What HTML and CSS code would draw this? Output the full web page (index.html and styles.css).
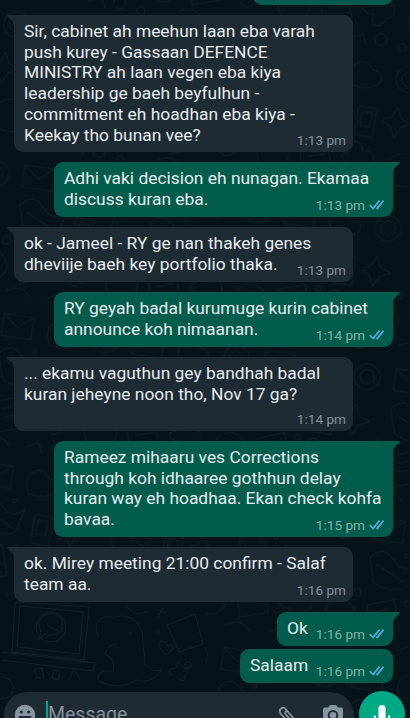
FILE: index.html
```html
<!DOCTYPE html>
<html lang="dv-Latn">
<head>
<meta charset="utf-8">
<title>Chat</title>
<link rel="stylesheet" href="styles.css">
</head>
<body>
<svg width="0" height="0" class="defs">
  <symbol id="ticks" viewBox="0 0 16 11"><path d="M.7 6.2 4.2 9.4 10.500 1.600M7.400 8.700l.9.700 6.200-7.800" fill="none" stroke="currentColor" stroke-width="1.800"/></symbol>
  <symbol id="tail" viewBox="0 0 8 10"><path d="M8 0H1Q-.6.4.6 1.8L5.2 6Q6.6 7.4 6.6 10H8Z" fill="currentColor"/></symbol>
</svg>
<main class="chat">
  <svg class="wallpaper" viewBox="0 0 410 718">
    <defs>
      <pattern id="doodles" width="132" height="150" patternUnits="userSpaceOnUse" patternTransform="rotate(8)">
        <circle cx="20" cy="22" r="13"/><circle cx="20" cy="22" r="7"/>
        <path d="M48 10h30v22H48zM48 10l15 12 15-12M97 35q-9-17 4-24 9-3 13 6 13 0 10 12-8 10-27 6zM8 62l5-11 5 11 11 4-11 5-5 11-5-11-10-5zM48 50q12-15 24 0t24 0l-7 25q-17 9-34 0zM55 56l31 15M106 55h18v29h-18zM110 60h10v14h-10zM12 103q15-14 27 0t-5 25q-26 6-22-25zM52 98l26-9 9 30-28 9zM60 104l15-5M63 112l17-5M103 103c-9-15 14-17 13-3 12-7 18 11 5 14-2 15-20 8-12-2-15 2-16-11-6-9zM46 137q15-10 25 3M88 139l12-6 5 11"/>
        <circle cx="91" cy="91" r="3"/><circle cx="40" cy="87" r="4"/><circle cx="84" cy="44" r="2"/><circle cx="9" cy="141" r="4"/><circle cx="119" cy="136" r="6"/>
      </pattern>
    </defs>
    <rect class="tile" width="410" height="600" fill="url(#doodles)"/>
    <rect class="tile" x="205" y="600" width="205" height="118" fill="url(#doodles)"/>
    <path d="M15 602 12 652 84 660 89 607zM20 606 17 647 79 654 83 612zM2 652l93 11-2 8-91-11M98 637q-7-22 15-20 21-5 29 14l3 34q8 8 16 5-8 15-25 10-15 11-36 2-7-12 13-11 3-12-8-17 4-12 13-9M167 625l28-11 8 30-24 8zM34 670l8-2 2 9-7 1zM54 670l6 2-2 8-6-2zM69 680l5-12 6 12M161 649q-6-8 2-8 4 2 5 5 5-4 5 3l-7 6zM126 606q8 12 22 5M157 610l9 3m-8 5 5-11M173 676q-9-7 3-8 2-10 7 0 9 1 2 7 1 9-6 4"/>
    <circle cx="51" cy="627" r="15"/><path d="m38 640 3-8q-6-12 4-17 11-5 17 5 3 14-10 15-5 1-8-1zM46 621q3 9 12 9"/>
    <circle cx="130" cy="633" r="1"/><circle cx="157" cy="632" r="2"/><circle cx="188" cy="665" r="3"/><circle cx="2" cy="688" r="11"/>
  </svg>

  <section class="messages">
    <div class="message out cut"></div>

    <div class="message in six"><svg class="tail"><use href="#tail"/></svg><p>Sir, cabinet ah meehun laan eba varah<br>push kurey - Gassaan DEFENCE<br>MINISTRY ah laan vegen eba kiya<br>leadership ge baeh beyfulhun -<br>commitment eh hoadhan eba kiya -<br>Keekay tho bunan vee?</p><span class="meta">1:13 pm</span></div>

    <div class="message out"><svg class="tail"><use href="#tail"/></svg><p>Adhi vaki decision eh nunagan. Ekamaa<br>discuss kuran eba.</p><span class="meta">1:13 pm <svg class="ticks"><use href="#ticks"/></svg></span></div>

    <div class="message in"><svg class="tail"><use href="#tail"/></svg><p>ok - Jameel - RY ge nan thakeh genes<br>dheviije baeh key portfolio thaka.</p><span class="meta">1:13 pm</span></div>

    <div class="message out"><svg class="tail"><use href="#tail"/></svg><p>RY geyah badal kurumuge kurin cabinet<br>announce koh nimaanan.</p><span class="meta">1:14 pm <svg class="ticks"><use href="#ticks"/></svg></span></div>

    <div class="message in spaced"><svg class="tail"><use href="#tail"/></svg><p>... ekamu vaguthun gey bandhah badal<br>kuran jeheyne noon tho, Nov 17 ga?</p><span class="meta">1:14 pm</span></div>

    <div class="message out four"><svg class="tail"><use href="#tail"/></svg><p>Rameez mihaaru ves Corrections<br>through koh idhaaree gothhun delay<br>kuran way eh hoadhaa. Ekan check kohfa<br>bavaa.</p><span class="meta">1:15 pm <svg class="ticks"><use href="#ticks"/></svg></span></div>

    <div class="message in"><svg class="tail"><use href="#tail"/></svg><p>ok. Mirey meeting 21:00 confirm - Salaf<br>team aa.</p><span class="meta">1:16 pm</span></div>

    <div class="message out single ok"><svg class="tail"><use href="#tail"/></svg><p>Ok</p><span class="meta">1:16 pm <svg class="ticks"><use href="#ticks"/></svg></span></div>

    <div class="message out single salaam"><p>Salaam</p><span class="meta">1:16 pm <svg class="ticks"><use href="#ticks"/></svg></span></div>
  </section>

  <footer class="composer">
    <div class="field">
      <svg class="emoji" viewBox="0 0 22 22"><circle cx="11" cy="11" r="10.2" fill="#8797a0"/><circle cx="7.3" cy="8" r="1.6" fill="#1f2c34"/><circle cx="14.7" cy="8" r="1.6" fill="#1f2c34"/><path d="M4.500 12h13q-1 5.500-6.500 5.500T4.500 12z" fill="#1f2c34"/></svg>
      <span class="caret"></span>
      <span class="placeholder">Message</span>
      <svg class="clip" viewBox="0 0 24 24"><path d="M21 21 8 5.500Q5.500 2.500 3 4.500T2.500 9.500L14 22.500M17 21.500 7.500 10Q6.500 8 8 7.500T10.500 8.500L22 22" fill="none" stroke="#8797a0" stroke-width="1.700"/></svg>
      <svg class="camera" viewBox="0 0 22 22"><path d="M2.500 3.500H6L8 1h6l2 2.500h3.500Q21 3.500 21 5.500V18q0 2-2 2H3q-2 0-2-2V5.500q0-2 1.500-2z" fill="#8797a0"/><circle cx="11" cy="11.200" r="5.300" fill="#1f2c34"/><circle cx="11" cy="11.200" r="3.300" fill="#8797a0"/></svg>
    </div>
    <div class="mic"><svg viewBox="0 0 20 26"><rect x="6.400" y="1" width="7.200" height="15" rx="3.600" fill="#fff"/><path d="M2.700 11.500Q3 19 10 19t7.300-7.500M10 19v5" fill="none" stroke="#fff" stroke-width="2"/></svg></div>
  </footer>
</main>
</body>
</html>
```
FILE: styles.css
```css
* { box-sizing: border-box; }
body { margin: 0; background: #07131a; font-family: Roboto, "Liberation Sans", sans-serif; }
.defs { position: absolute; }
.chat { position: relative; width: 410px; height: 718px; overflow: hidden; display: flex; flex-direction: column; }
.wallpaper { position: absolute; inset: 0; width: 410px; height: 718px; fill: none; stroke: #10212a; stroke-width: 1; }
.tile { stroke: none; }
pattern { stroke: #0e1e26; fill: none; }
.messages { position: relative; height: 692px; flex: none; display: flex; flex-direction: column; gap: 10px; padding: 0 17px 0 14px; overflow: hidden; }
.message { position: relative; display: grid; flex: none; width: 339px; height: 55px; padding: 6.500px 10px 0; border-radius: 9px; color: #e6ecef; }
.message p { grid-area: 1 / 1; margin: 0; font-size: 17.400px; line-height: 20.700px; white-space: nowrap; }
.meta { grid-area: 1 / 1; align-self: end; justify-self: end; display: flex; align-items: center; gap: 4px; height: 16px; margin: 0 -3px 4px 0; font-size: 13.600px; line-height: 16px; color: #84919a; white-space: nowrap; }
.in { background: #1f2b33; border-top-left-radius: 0; }
.out { align-self: flex-end; background: #015c4b; }
.out .meta { color: #84b2a7; margin-right: -2px; }
.ticks { width: 16px; height: 11px; color: #4fa9cf; }
.tail { position: absolute; top: 0; left: -7px; width: 8px; height: 10px; color: #1f2b33; }
.out .tail { left: auto; right: -7px; color: #015c4b; transform: scaleX(-1); }
.out:has(.tail) { border-top-right-radius: 0; }
.cut { width: 140px; height: 34px; margin-top: -29.500px; }
.six { height: 137px; }
.spaced { height: 74px; }
.four { height: 96px; }
.single { height: 34px; }
.ok { width: 116px; }
.salaam { width: 153px; margin-top: -7px; }
.composer { position: relative; flex: none; display: flex; gap: 5px; height: 46px; padding-left: 4px; margin-top: -1px; }
.field { display: flex; align-items: flex-start; width: 350px; height: 46px; margin-top: 1px; padding: 12px 10px 0 10px; border-radius: 23px; background: #1f2b33; }
.emoji { width: 22px; height: 22px; flex: none; }
.caret { width: 2px; height: 24px; margin: -3px 0 0 10px; background: #00a884; }
.placeholder { flex: 1; font-size: 19.500px; line-height: 24px; color: #84929b; margin-top: -1px; }
.clip { width: 24px; height: 24px; margin-right: 20px; }
.camera { width: 22px; height: 22px; }
.mic { display: flex; justify-content: center; flex: none; width: 46px; height: 46px; padding-top: 13px; border-radius: 50%; background: #00a884; }
.mic svg { width: 20px; height: 26px; }
```
